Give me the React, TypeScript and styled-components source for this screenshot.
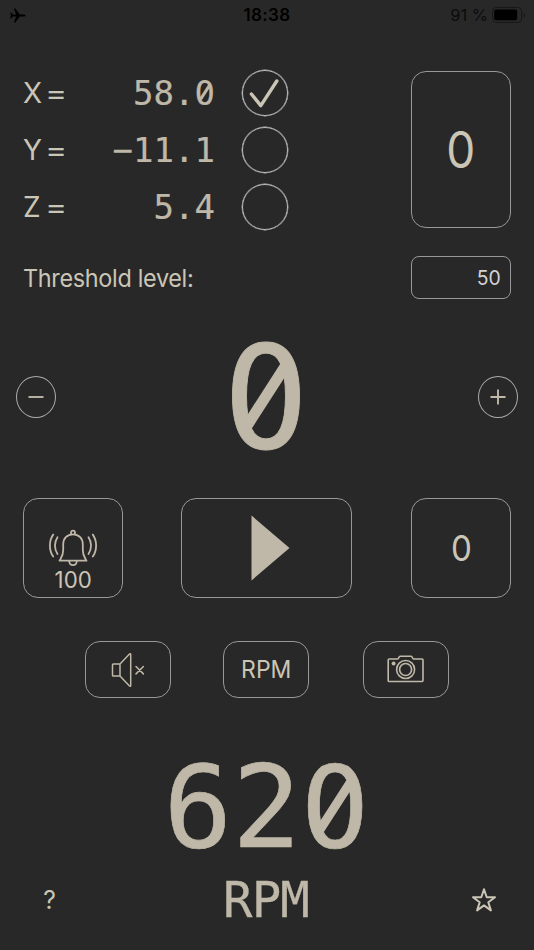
import React from "react";
import styled, { createGlobalStyle } from "styled-components";

const BG = "#282828";
const INK = "#bfb8a8";
const PALE = "#cbc5b6";
const LINE = "#98989b";

const GlobalStyle = createGlobalStyle`
  * { box-sizing: border-box; }
  body { margin: 0; background: ${BG}; }
  button { appearance: none; background: none; padding: 0; margin: 0; font: inherit; color: inherit; }
`;

const Screen = styled.main`
  width: 534px;
  height: 950px;
  overflow: hidden;
  display: flex;
  flex-direction: column;
  background: ${BG};
  color: ${PALE};
  font-family: Inter, "Liberation Sans", sans-serif;
`;

const StatusBar = styled.header`
  height: 30px;
  display: grid;
  grid-template-columns: 1fr auto 1fr;
  align-items: center;
  padding: 0 8px 0 10px;
  color: #000;
  font-size: 17px;
  line-height: 30px;
`;

const Clock = styled.time`
  font-weight: 600;
  letter-spacing: 0.4px;
  margin-right: 2px;
`;

const Battery = styled.div`
  display: flex;
  align-items: center;
  justify-content: flex-end;
  gap: 4px;
  color: #0c0c0c;
  font-size: 16.5px;
`;

const Label = styled.span<{
  $size: number;
  $track?: number;
  $squeeze?: number;
  $origin?: "left" | "center" | "right";
}>`
  display: inline-block;
  font-size: ${(p) => p.$size}px;
  letter-spacing: ${(p) => p.$track ?? 0}px;
  line-height: 1;
  white-space: nowrap;
  transform: scaleX(${(p) => p.$squeeze ?? 1});
  transform-origin: ${(p) => p.$origin ?? "center"};
`;

const Mono = styled.span<{ $size: number; $track?: number }>`
  display: inline-block;
  font-family: "DejaVu Sans Mono", monospace;
  font-size: ${(p) => p.$size}px;
  letter-spacing: ${(p) => p.$track ?? 0}px;
  line-height: 1;
  white-space: pre;
  color: ${INK};
  -webkit-text-stroke: 0.006em ${INK};
`;

/* Zero with a full diagonal bar across its counter. */
const SlashedZero = styled.span`
  position: relative;
  display: inline-block;
  line-height: 1;
  &::before,
  &::after {
    content: "";
    position: absolute;
    left: 0.301em;
    top: 0.482em;
  }
  &::before {
    width: 0.235em;
    height: 0.46em;
    border-radius: 50%;
    background: ${BG};
    transform: translate(-50%, -50%);
  }
  &::after {
    width: 0.51em;
    height: 0.076em;
    background: ${INK};
    transform: translate(-50%, -50%) rotate(-57.3deg);
  }
`;

const Readings = styled.section`
  display: flex;
  justify-content: space-between;
  height: 159px;
  margin: 40px 23px 0;
`;

const AxisList = styled.div`
  display: grid;
  grid-auto-rows: 46px;
  row-gap: 11px;
`;

const AxisRow = styled.div`
  display: grid;
  grid-template-columns: 70px 122px 73px;
  align-items: center;
`;

const AxisName = styled.span`
  display: flex;
  align-items: center;
`;

const AxisLetter = styled.span`
  width: 22px;
  font-size: 28px;
  line-height: 1;
`;

const Equals = styled.span`
  font-size: 28px;
  line-height: 1;
  transform: scaleX(1.2);
  transform-origin: left;
`;

const AxisValue = styled.span`
  justify-self: end;
  line-height: 1;
`;

const Check = styled.button`
  justify-self: end;
  width: 46px;
  height: 46px;
  border: 1.5px solid #bdbcc0;
  box-shadow: 0 0 0 0.4px #bdbcc0;
  border-radius: 50%;
  display: grid;
  place-items: center;
`;

const Tile = styled.button<{ $w: number; $h: number }>`
  width: ${(p) => p.$w}px;
  height: ${(p) => p.$h}px;
  border: 1px solid ${LINE};
  border-radius: 15px;
  display: flex;
  flex-direction: column;
  align-items: center;
  justify-content: center;
`;

const TallTile = styled(Tile)`
  margin-top: 1px;
  padding-top: 1px;
`;

const Threshold = styled.section`
  display: flex;
  justify-content: space-between;
  align-items: center;
  height: 43px;
  margin: 27px 23px 0;
`;

const ThresholdName = styled.span`
  padding-top: 2px;
  line-height: 1;
`;

const Field = styled.div`
  width: 100px;
  height: 43px;
  border: 1px solid ${LINE};
  border-radius: 8px;
  display: flex;
  align-items: center;
  justify-content: flex-end;
  padding: 1px 9px 0 0;
  color: #d2d1d5;
`;

const Counter = styled.section`
  display: flex;
  align-items: center;
  justify-content: space-between;
  height: 144px;
  margin: 26px 16px 0;
`;

const CounterValue = styled.div`
  padding: 4px 2px 0 0;
  line-height: 1;
`;

const Step = styled.button`
  width: 40px;
  height: 42px;
  border: 1px solid #acacad;
  border-radius: 50%;
  display: grid;
  place-items: center;
`;

const Actions = styled.section`
  display: grid;
  grid-template-columns: 158px 230px 100px;
  height: 100px;
  margin: 29px 23px 0;
`;

const AlarmStack = styled.span`
  display: flex;
  flex-direction: column;
  align-items: center;
  gap: 2px;
  padding-top: 25px;
`;

const Options = styled.section`
  display: grid;
  grid-template-columns: 138px 140px 86px;
  height: 57px;
  margin: 43px 85px 0;
`;

const Speed = styled.section`
  display: flex;
  justify-content: center;
  height: 114px;
  padding-right: 1px;
  margin-top: 53px;
`;

const Footer = styled.footer`
  display: grid;
  grid-template-columns: 54px 1fr 54px;
  align-items: center;
  justify-items: center;
  height: 50px;
  margin: 10px 23px 0;
`;

const Unit = styled.div`
  padding-right: 2px;
  line-height: 1;
`;

function Digits({ text, size }: { text: string; size: number }) {
  return (
    <Mono $size={size}>
      {text.split("").map((c, i) => (c === "0" ? <SlashedZero key={i}>0</SlashedZero> : c))}
    </Mono>
  );
}

const axes = [
  { name: "X", value: "58.0", on: true },
  { name: "Y", value: "−11.1", on: false },
  { name: "Z", value: "5.4", on: false },
];

const Plane = () => (
  <svg width="16" height="15" viewBox="0 0 16 15">
    <path d="M15.5 7.5c0-.7-.8-1.1-1.8-1.1H9.8L5.3.6H3.9l2.2 5.8H2.7L1.2 4.4H.3l.6 3.1-.6 3.1h.9l1.5-2h3.4L3.9 14.4h1.4l4.5-5.8h3.9c1 0 1.8-.4 1.8-1.1z" fill="#000" />
  </svg>
);

const BatteryIcon = () => (
  <svg width="34" height="16" viewBox="0 0 34 16">
    <rect x=".6" y=".6" width="29" height="14.8" rx="4" fill="none" stroke="#171717" strokeWidth="1" />
    <rect x="2.2" y="2.6" width="23" height="10.6" rx="2" fill="#000" />
    <path d="M31.6 5.4c1.8.8 1.8 4.4 0 5.2z" fill="#181818" />
  </svg>
);

const Bell = () => (
  <svg width="50" height="38" viewBox="0 0 50 38" fill="none" stroke={INK} strokeWidth="1.8" strokeLinecap="round" strokeLinejoin="round">
    <path d="M23 5V3.6a2 2 0 0 1 4 0V5M11.5 31.7H38.5C36.5 28 34.8 26.5 34.8 21V15.4C34.8 9.5 31 5.4 25 5.4S15.2 9.5 15.2 15.4V21C15.2 26.5 13.5 28 11.5 31.7Z" />
    <path d="M21.2 32c.3 5.5 7.3 5.5 7.6 0" />
    <path d="M9.5 8.2c-3.4 5-3.4 11.8 0 16.8M5.2 5.6c-4.4 6-4.4 15.8 0 22M40.5 8.2c3.4 5 3.4 11.8 0 16.8M44.8 5.6c4.4 6 4.4 15.8 0 22" />
  </svg>
);

const Muted = () => (
  <svg width="34" height="36" viewBox="0 0 34 36" fill="none" stroke={INK} strokeWidth="1.5" strokeLinecap="round" strokeLinejoin="round">
    <path d="M9 12H2.3c-.5 0-.8.3-.8.8v10.4c0 .5.3.8.8.8H9M9 12v12L18.5 34c.5.4 1.2.3 1.2-.6V2.6c0-.9-.7-1-1.2-.6z" />
    <path d="M25 14.5l7.4 7.4M32.4 14.5L25 21.9" />
  </svg>
);

const Camera = () => (
  <svg width="38" height="32" viewBox="0 0 38 32" fill="none" stroke={INK} strokeWidth="1.6" strokeLinejoin="round">
    <path d="M2.2 5H10.6c1.2 0 1.2-2.8 2.5-2.8h11C25.4 2.2 25.4 5 26.6 5h8.4c.6 0 1 .4 1 1v20.5c0 .6-.4 1-1 1H2.2c-.6 0-1-.4-1-1V6c0-.6.4-1 1-1z" />
    <circle cx="18.6" cy="15.5" r="9" />
    <circle cx="18.6" cy="15.5" r="6" strokeWidth="1.7" />
    <circle cx="6.6" cy="9.5" r="2" fill={INK} stroke="none" />
  </svg>
);

export default function App() {
  return (
    <>
      <GlobalStyle />
      <Screen>
        <StatusBar>
          <Plane />
          <Clock>18:38</Clock>
          <Battery>
            <span>91 %</span>
            <BatteryIcon />
          </Battery>
        </StatusBar>

        <Readings>
          <AxisList>
            {axes.map((a) => (
              <AxisRow key={a.name}>
                <AxisName>
                  <AxisLetter>{a.name}</AxisLetter>
                  <Equals>=</Equals>
                </AxisName>
                <AxisValue>
                  <Digits text={a.value} size={34} />
                </AxisValue>
                <Check>
                  {a.on && (
                    <svg width="32" height="30" viewBox="0 0 32 30" fill="none" stroke={PALE} strokeWidth="3.4" strokeLinecap="round" strokeLinejoin="round">
                      <path d="M2.4 16L11.8 27.6L27.8 3" />
                    </svg>
                  )}
                </Check>
              </AxisRow>
            ))}
          </AxisList>
          <TallTile $w={100} $h={157}>
            <Label $size={50} $squeeze={0.92}>0</Label>
          </TallTile>
        </Readings>

        <Threshold>
          <ThresholdName>
            <Label $size={24.5} $track={-0.35} $squeeze={0.957} $origin="left">Threshold level:</Label>
          </ThresholdName>
          <Field>
            <Label $size={20} $squeeze={0.97} $origin="right">50</Label>
          </Field>
        </Threshold>

        <Counter>
          <Step aria-label="Decrease">
            <svg width="18" height="18" stroke={INK} strokeWidth="1.9"><path d="M1.5 9h15" /></svg>
          </Step>
          <CounterValue>
            <Digits text="0" size={142} />
          </CounterValue>
          <Step aria-label="Increase">
            <svg width="18" height="18" stroke={INK} strokeWidth="1.9"><path d="M1.5 9h15M9 1.5v15" /></svg>
          </Step>
        </Counter>

        <Actions>
          <Tile $w={100} $h={100}>
            <AlarmStack>
              <Bell />
              <Label $size={23} $squeeze={0.97}>100</Label>
            </AlarmStack>
          </Tile>
          <Tile $w={171} $h={100} aria-label="Start">
            <svg width="46" height="66" viewBox="0 0 46 66"><path d="M7.5 .5L45.5 33 7.5 65.5Z" fill={INK} /></svg>
          </Tile>
          <Tile $w={100} $h={100}>
            <Label $size={36} $squeeze={0.92}>0</Label>
          </Tile>
        </Actions>

        <Options>
          <Tile $w={86} $h={57} aria-label="Sound off"><Muted /></Tile>
          <Tile $w={86} $h={57}><Label $size={24} $squeeze={0.96}>RPM</Label></Tile>
          <Tile $w={86} $h={57} aria-label="Camera"><Camera /></Tile>
        </Options>

        <Speed>
          <Digits text="620" size={114} />
        </Speed>

        <Footer>
          <Label $size={26} $squeeze={0.95}>?</Label>
          <Unit>
            <Mono $size={49} $track={-0.8}>RPM</Mono>
          </Unit>
          <svg width="26" height="26" viewBox="0 0 26 26" fill="none" stroke={PALE} strokeWidth="2" strokeLinejoin="round">
            <path d="M13 2.2l2.7 8h8.3l-6.7 5 2.6 8.2L13 18.4l-6.9 5 2.6-8.2-6.7-5h8.3z" />
          </svg>
        </Footer>
      </Screen>
    </>
  );
}
